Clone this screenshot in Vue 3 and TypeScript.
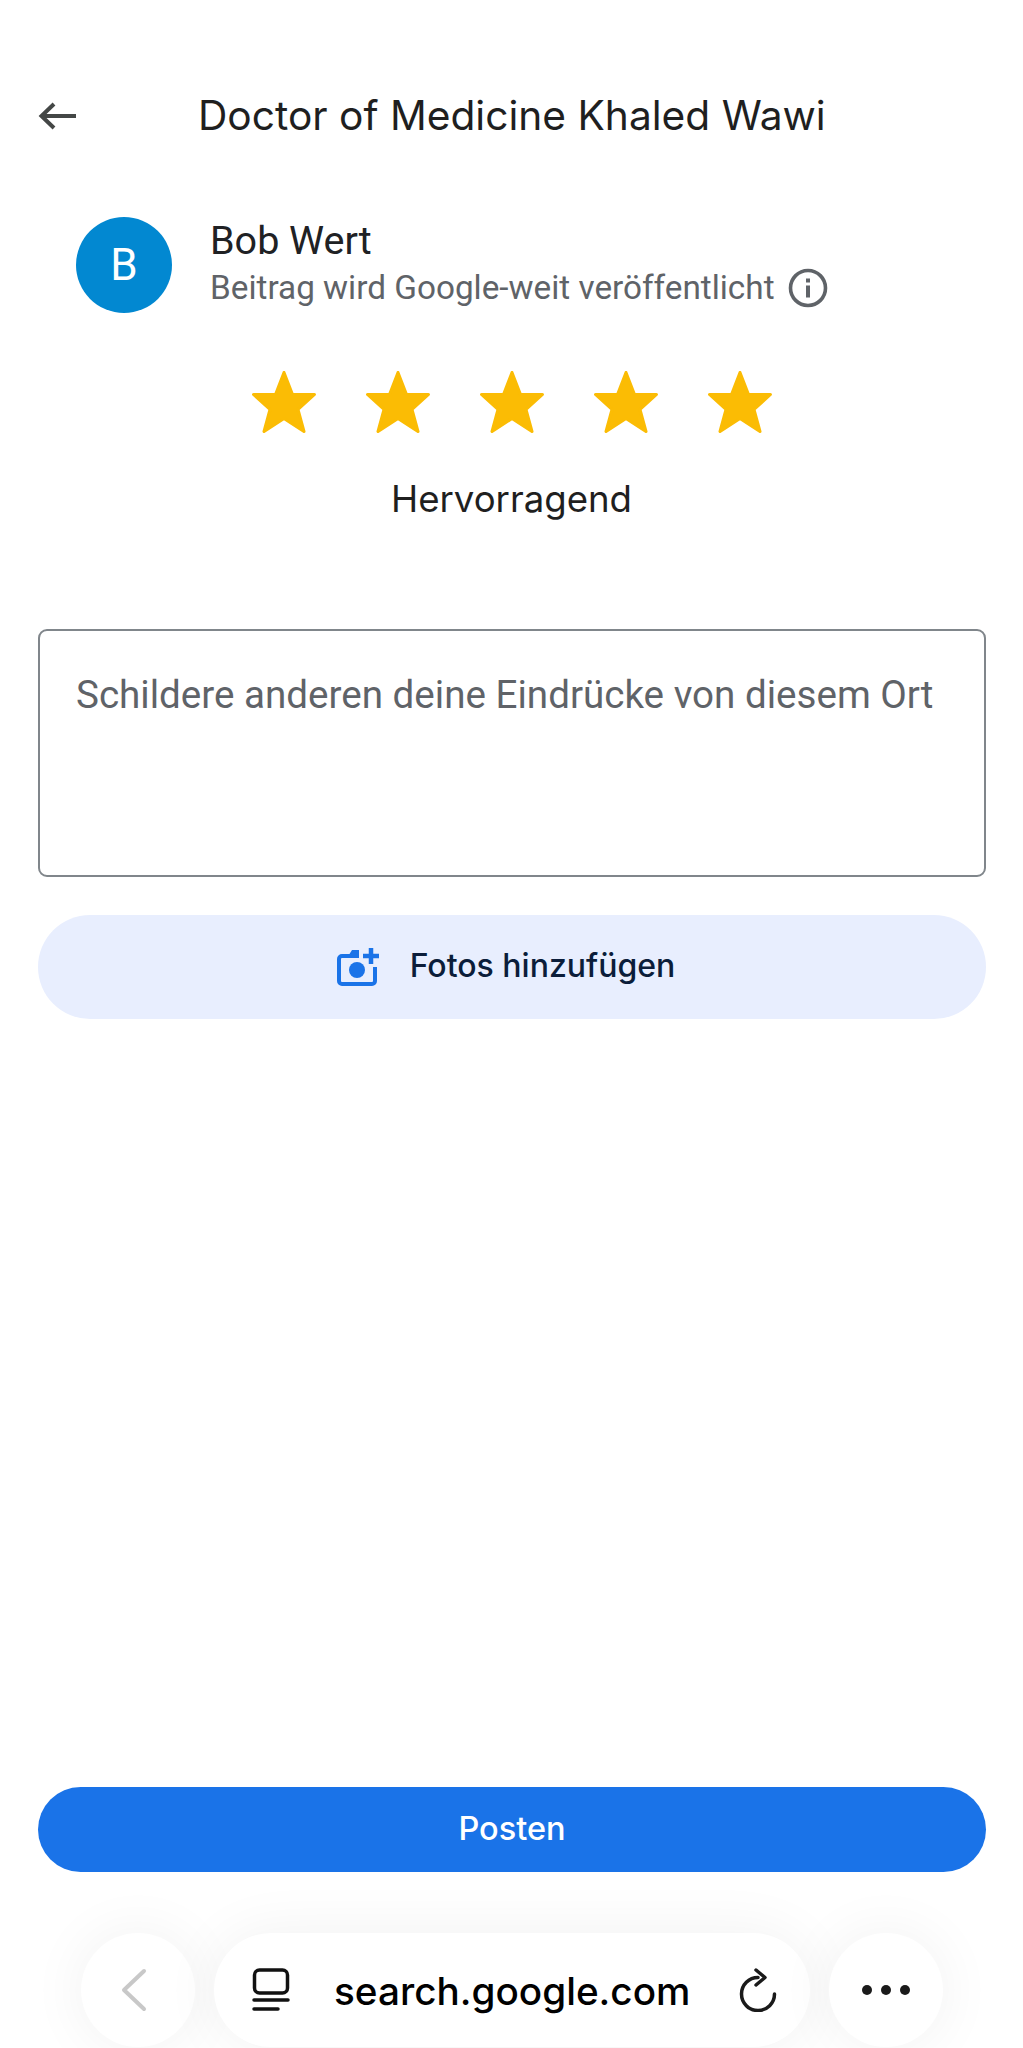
<template>
  <div class="review-page">
    <header class="top-bar">
      <svg class="back-icon" viewBox="0 0 38 28" fill="none" stroke="#444746" stroke-width="4">
        <path d="M38 14H4" />
        <path d="M16 2 3.5 14 16 26" />
      </svg>
      <h1 class="place-title">Doctor of Medicine Khaled Wawi</h1>
    </header>

    <div class="author-row">
      <div class="avatar">B</div>
      <div class="author-text">
        <span class="author-name">Bob Wert</span>
        <div class="author-note">
          <span>Beitrag wird Google-weit veröffentlicht</span>
          <svg class="info-icon" viewBox="0 0 40 40" fill="none">
            <circle cx="20" cy="20" r="17.5" stroke="#5f6368" stroke-width="3.6" />
            <rect x="18" y="17.5" width="4" height="12" fill="#5f6368" />
            <rect x="18" y="10.5" width="4" height="4" fill="#5f6368" />
          </svg>
        </div>
      </div>
    </div>

    <div class="stars">
      <svg v-for="n in 5" :key="n" class="star" viewBox="0 0 64 62">
        <polygon
          points="32,1.500 40.500,23.500 62.500,23.500 46,38.500 52,60.500 32,47.500 12,60.500 18,38.500 1.500,23.500 23.500,23.500"
          fill="#fbbc04"
          stroke="#fbbc04"
          stroke-width="3"
          stroke-linejoin="round"
        />
      </svg>
    </div>
    <div class="rating-label">Hervorragend</div>

    <div class="review-box">Schildere anderen deine Eindrücke von diesem Ort</div>

    <button class="photo-btn">
      <svg class="camera-icon" viewBox="0 0 42 40" fill="none">
        <path d="M10 11 15 3h7v8z" fill="#1a73e8" />
        <path d="M14 9H5a3 3 0 0 0-3 3v22a3 3 0 0 0 3 3h30a3 3 0 0 0 3-3V20" stroke="#1a73e8" stroke-width="4" />
        <circle cx="20" cy="23" r="8" fill="#1a73e8" />
        <path d="M34 1v16M26 9h16" stroke="#1a73e8" stroke-width="4.500" />
      </svg>
      <span class="photo-label">Fotos hinzufügen</span>
    </button>

    <button class="post-btn">Posten</button>

    <nav class="browser-bar">
      <div class="round-btn">
        <svg class="chevron" viewBox="0 0 26 44" fill="none">
          <path d="M23 3 3 22l20 19" stroke="#c8c8c8" stroke-width="4" stroke-linecap="round" stroke-linejoin="round" />
        </svg>
      </div>
      <div class="url-pill">
        <svg class="tab-icon" viewBox="0 0 38 44" fill="none" stroke="#111" stroke-linecap="round">
          <rect x="2.500" y="2" width="33" height="23" rx="5" stroke-width="3.500" />
          <path d="M2 32h34" stroke-width="3.500" />
          <path d="M2 41h24" stroke-width="3.500" />
        </svg>
        <span class="url-text">search.google.com</span>
        <svg class="reload-icon" viewBox="0 0 38 44" fill="none" stroke="#1a1a1a" stroke-width="3.500" stroke-linecap="round" stroke-linejoin="round">
          <path d="M19 9.500A16.500 16.500 0 1 0 35.500 26" />
          <path d="M17 2l9 7.500-9 7.500" />
        </svg>
      </div>
      <div class="round-btn">
        <div class="dots"><i></i><i></i><i></i></div>
      </div>
    </nav>
  </div>
</template>

<script setup lang="ts">
</script>

<style>
html, body { background: #fff; }
</style>

<style scoped>
.review-page {
  width: 1023px; height: 2048px; box-sizing: border-box; overflow: hidden;
  display: flex; flex-direction: column; background: #fff;
  font-family: Roboto, "Liberation Sans", sans-serif;
}
.top-bar { display: flex; align-items: center; padding: 91px 0 0 38px; height: 49px; }
.back-icon { width: 38px; height: 28px; flex: none; }
.place-title {
  margin: -1px 0 0 122px; font-family: Inter, sans-serif; font-size: 40.7px; font-weight: 400;
  color: #1f1f1f; white-space: nowrap; line-height: 49px;
}
.author-row { display: flex; align-items: center; margin: 77px 0 0 76px; gap: 38px; }
.avatar {
  width: 96px; height: 96px; border-radius: 50%; background: #0288d1; color: #fff;
  font-size: 44px; display: flex; align-items: center; justify-content: center;
}
.author-text { display: flex; flex-direction: column; margin-top: -2px; }
.author-name { font-size: 39.500px; line-height: 44px; color: #202124; }
.author-note { display: flex; align-items: center; gap: 13px; font-size: 33.300px; line-height: 44px; color: #5f6368; margin-top: 3px; }
.info-icon { width: 40px; height: 40px; flex: none; }
.stars { display: flex; justify-content: center; gap: 50px; margin-top: 58px; }
.star { width: 64px; height: 62px; flex: none; }
.rating-label {
  margin-top: 43px; text-align: center; font-family: Inter, sans-serif; font-size: 36.600px;
  line-height: 46px; color: #1f1f1f;
}
.review-box {
  margin: 107px 37px 0 38px; height: 248px; box-sizing: border-box; padding: 42px 36px 0;
  border: 2px solid #80868b; border-radius: 9px; font-size: 38.600px; line-height: 44px; color: #5f6368;
  white-space: nowrap;
}
.photo-btn {
  margin: 38px 37px 0 38px; height: 104px; border: 0; border-radius: 52px; background: #e8eefe;
  display: flex; align-items: center; justify-content: center; gap: 31px; padding: 0 12px 0 0;
  font-family: Inter, sans-serif; font-size: 32px; font-weight: 500; color: #0b1d3a; flex: none;
}
.photo-label { margin-top: -3px; }
.camera-icon { width: 42px; height: 40px; flex: none; }
.post-btn {
  margin: auto 37px 0 38px; height: 85px; border: 0; border-radius: 43px; background: #1a73e8;
  color: #fff; font-family: Inter, sans-serif; font-size: 32.500px; font-weight: 500; flex: none;
  padding: 0 0 3px;
}
.browser-bar { display: flex; justify-content: center; gap: 19px; margin-top: 61px; height: 115px; flex: none; padding-left: 1px; }
.round-btn, .url-pill { background: #fff; box-shadow: 0 0 60px rgba(0, 0, 0, 0.06); }
.round-btn { width: 114px; height: 114px; border-radius: 50%; display: flex; align-items: center; justify-content: center; flex: none; }
.chevron { width: 26px; height: 44px; margin-right: 8px; }
.url-pill {
  width: 596px; height: 114px; border-radius: 57px; display: flex; align-items: center;
  padding: 0 33px 0 38px; box-sizing: border-box; flex: none;
}
.tab-icon { width: 38px; height: 44px; flex: none; }
.url-text { margin: 2px 0 0 44px; font-family: Inter, sans-serif; font-size: 38.700px; font-weight: 500; color: #000; white-space: nowrap; flex: 1; }
.reload-icon { width: 38px; height: 44px; flex: none; }
.dots { display: flex; gap: 9px; }
.dots i { display: block; width: 10px; height: 10px; border-radius: 50%; background: #1a1a1a; }
</style>
